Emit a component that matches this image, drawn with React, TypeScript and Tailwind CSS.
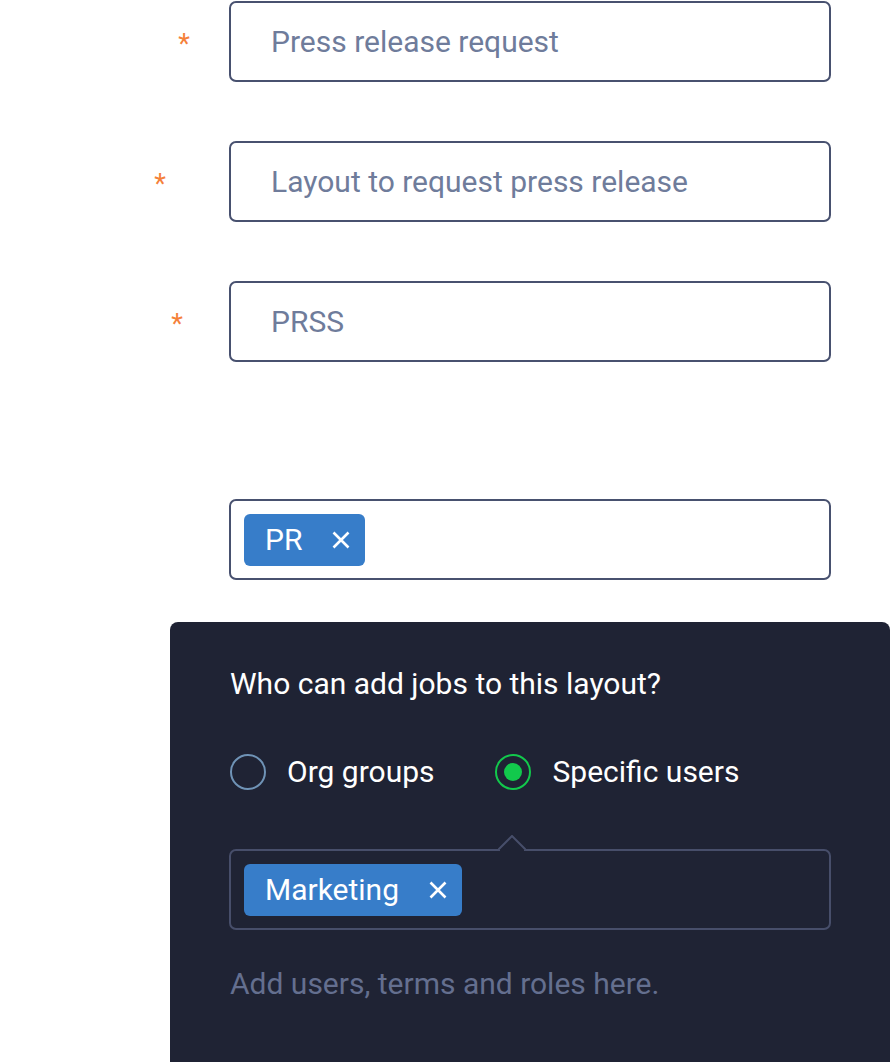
const font = { fontFamily: 'Roboto, "Liberation Sans", sans-serif' };

function Cross() {
  return (
    <svg width="18" height="18" viewBox="0 0 18 18" className="shrink-0">
      <path d="M1.5 1.5 L16.5 16.5 M16.5 1.5 L1.5 16.5" stroke="white" strokeWidth="2.6" strokeLinecap="butt" />
    </svg>
  );
}

function Field({ value, starPad }: { value: string; starPad: string }) {
  return (
    <div className="flex items-center">
      <div className={`flex w-[229px] justify-end pt-[6px] ${starPad}`}>
        <span className="text-[27px] leading-none text-[#f5813a]">*</span>
      </div>
      <div className="flex h-[81px] w-[602px] items-center rounded-[7px] border-2 border-[#48516f] bg-white pl-[40px] text-[30px] text-[#6f7c9b]">
        {value}
      </div>
    </div>
  );
}

function Tag({ label }: { label: string }) {
  return (
    <div className="flex h-[52px] items-center gap-[30px] rounded-[6px] bg-[#377dc9] pl-[21px] pr-[15px] text-[30px] text-white">
      <span>{label}</span>
      <Cross />
    </div>
  );
}

export default function App() {
  return (
    <div style={font} className="relative h-[1062px] w-[890px] overflow-hidden bg-white">
      <div className="flex flex-col gap-[59px] pt-[1px]">
        <Field value="Press release request" starPad="pr-[39px]" />
        <Field value="Layout to request press release" starPad="pr-[63px]" />
        <Field value="PRSS" starPad="pr-[46px]" />
      </div>

      <div className="ml-[229px] mt-[137px] flex h-[81px] w-[602px] items-center rounded-[7px] border-2 border-[#48516f] px-[13px]">
        <Tag label="PR" />
      </div>

      <section className="ml-[170px] mt-[42px] h-[500px] rounded-tl-[8px] rounded-tr-[8px] bg-[#1f2334] pl-[59px] pr-[59px] pt-[42px]">
        <h2 className="pl-[1px] text-[30px] leading-[40px] text-white">Who can add jobs to this layout?</h2>

        <div className="mt-[46px] flex h-[44px] items-center pl-[1px]">
          <label className="flex items-center gap-[21px]">
            <span className="h-[36px] w-[36px] rounded-full border-2 border-[#6f93b6]" />
            <span className="text-[30px] leading-[44px] text-white">Org groups</span>
          </label>
          <label className="ml-[60px] flex items-center gap-[22px]">
            <span className="flex h-[36px] w-[36px] items-center justify-center rounded-full border-2 border-[#12c94c]">
              <span className="h-[18px] w-[18px] rounded-full bg-[#12c94c]" />
            </span>
            <span className="text-[30px] leading-[44px] text-white">Specific users</span>
          </label>
        </div>

        <div className="relative mt-[55px] flex h-[81px] items-center rounded-[7px] border-2 border-[#474e6a] px-[13px]">
          <svg className="absolute left-[267px] top-[-16px]" width="28" height="17" viewBox="0 0 28 17">
            <path d="M0 15 L14 1 L28 15" fill="#1f2334" stroke="#474e6a" strokeWidth="2" />
            <rect x="2" y="15" width="24" height="2" fill="#1f2334" />
          </svg>
          <Tag label="Marketing" />
        </div>

        <p className="mt-[32px] pl-[1px] text-[30px] leading-[44px] text-[#646f8f]">Add users, terms and roles here.</p>
      </section>
    </div>
  );
}
